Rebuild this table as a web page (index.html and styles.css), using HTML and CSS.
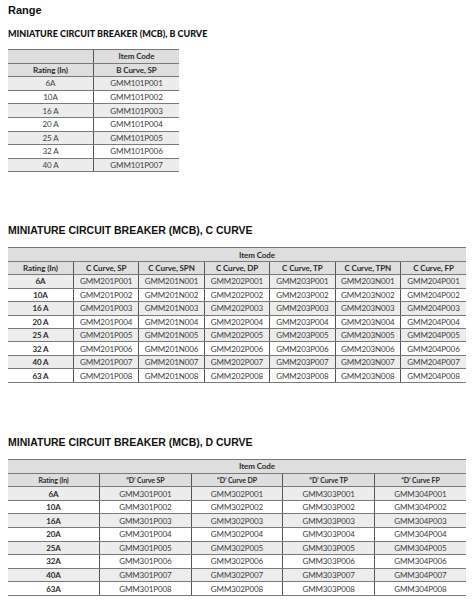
FILE: index.html
```html
<!DOCTYPE html>
<html>
<head>
<meta charset="utf-8">
<link rel="stylesheet" href="styles.css">
</head>
<body>
<h1 class="page-title">Range</h1>

<h2 class="sub-title sub-b">MINIATURE CIRCUIT BREAKER (MCB), B CURVE</h2>
<table class="grid grid-b">
  <tr class="head"><td></td><td class="strong">Item Code</td></tr>
  <tr class="head"><td class="strong">Rating (In)</td><td class="strong">B Curve, SP</td></tr>
  <tr class="odd"><td>6A</td><td>GMM101P001</td></tr>
  <tr><td>10A</td><td>GMM101P002</td></tr>
  <tr class="odd"><td>16 A</td><td>GMM101P003</td></tr>
  <tr><td>20 A</td><td>GMM101P004</td></tr>
  <tr class="odd"><td>25 A</td><td>GMM101P005</td></tr>
  <tr><td>32 A</td><td>GMM101P006</td></tr>
  <tr class="odd"><td>40 A</td><td>GMM101P007</td></tr>
</table>

<h2 class="sub-title sub-arial sub-c">MINIATURE CIRCUIT BREAKER (MCB), C CURVE</h2>
<table class="grid grid-c">
  <tr class="head top"><td colspan="7" class="strong span">Item Code</td></tr>
  <tr class="head"><td class="strong">Rating (In)</td><td class="strong">C Curve, SP</td><td class="strong">C Curve, SPN</td><td class="strong">C Curve, DP</td><td class="strong">C Curve, TP</td><td class="strong">C Curve, TPN</td><td class="strong">C Curve, FP</td></tr>
  <tr class="odd"><td class="strong">6A</td><td>GMM201P001</td><td>GMM201N001</td><td>GMM202P001</td><td>GMM203P001</td><td>GMM203N001</td><td>GMM204P001</td></tr>
  <tr><td class="strong">10A</td><td>GMM201P002</td><td>GMM201N002</td><td>GMM202P002</td><td>GMM203P002</td><td>GMM203N002</td><td>GMM204P002</td></tr>
  <tr class="odd"><td class="strong">16 A</td><td>GMM201P003</td><td>GMM201N003</td><td>GMM202P003</td><td>GMM203P003</td><td>GMM203N003</td><td>GMM204P003</td></tr>
  <tr><td class="strong">20 A</td><td>GMM201P004</td><td>GMM201N004</td><td>GMM202P004</td><td>GMM203P004</td><td>GMM203N004</td><td>GMM204P004</td></tr>
  <tr class="odd"><td class="strong">25 A</td><td>GMM201P005</td><td>GMM201N005</td><td>GMM202P005</td><td>GMM203P005</td><td>GMM203N005</td><td>GMM204P005</td></tr>
  <tr><td class="strong">32 A</td><td>GMM201P006</td><td>GMM201N006</td><td>GMM202P006</td><td>GMM203P006</td><td>GMM203N006</td><td>GMM204P006</td></tr>
  <tr class="odd"><td class="strong">40 A</td><td>GMM201P007</td><td>GMM201N007</td><td>GMM202P007</td><td>GMM203P007</td><td>GMM203N007</td><td>GMM204P007</td></tr>
  <tr><td class="strong">63 A</td><td>GMM201P008</td><td>GMM201N008</td><td>GMM202P008</td><td>GMM203P008</td><td>GMM203N008</td><td>GMM204P008</td></tr>
</table>

<h2 class="sub-title sub-arial sub-d">MINIATURE CIRCUIT BREAKER (MCB), D CURVE</h2>
<table class="grid grid-d">
  <tr class="head top"><td colspan="5" class="strong span">Item Code</td></tr>
  <tr class="head small"><td class="strong">Rating (In)</td><td class="strong">“D’ Curve SP</td><td class="strong">“D’ Curve DP</td><td class="strong">“D’ Curve TP</td><td class="strong">“D’ Curve FP</td></tr>
  <tr class="odd"><td class="strong">6A</td><td>GMM301P001</td><td>GMM302P001</td><td>GMM303P001</td><td>GMM304P001</td></tr>
  <tr><td class="strong">10A</td><td>GMM301P002</td><td>GMM302P002</td><td>GMM303P002</td><td>GMM304P002</td></tr>
  <tr class="odd"><td class="strong">16A</td><td>GMM301P003</td><td>GMM302P003</td><td>GMM303P003</td><td>GMM304P003</td></tr>
  <tr><td class="strong">20A</td><td>GMM301P004</td><td>GMM302P004</td><td>GMM303P004</td><td>GMM304P004</td></tr>
  <tr class="odd"><td class="strong">25A</td><td>GMM301P005</td><td>GMM302P005</td><td>GMM303P005</td><td>GMM304P005</td></tr>
  <tr><td class="strong">32A</td><td>GMM301P006</td><td>GMM302P006</td><td>GMM303P006</td><td>GMM304P006</td></tr>
  <tr class="odd"><td class="strong">40A</td><td>GMM301P007</td><td>GMM302P007</td><td>GMM303P007</td><td>GMM304P007</td></tr>
  <tr><td class="strong">63A</td><td>GMM301P008</td><td>GMM302P008</td><td>GMM303P008</td><td>GMM304P008</td></tr>
</table>
</body>
</html>
```
FILE: styles.css
```css
html, body {
  margin: 0;
  padding: 0;
  background: #ffffff;
}
body {
  padding: 0 8px;
  width: 458px;
  color: #111;
  font-family: "Liberation Sans", Arial, sans-serif;
}
.page-title {
  margin: 4px 0 0 0;
  font-size: 11px;
  line-height: 13px;
  font-weight: bold;
  color: #111;
}
.sub-title {
  margin: 0;
  font-weight: bold;
  color: #111;
}
.sub-b {
  margin-top: 10.5px;
  font-family: Lato, "Liberation Sans", sans-serif;
  font-size: 9px;
  line-height: 11px;
  font-weight: 900;
}
.sub-arial {
  font-family: "Liberation Sans", Arial, sans-serif;
  font-size: 10.5px;
  line-height: 12px;
}
.sub-c { margin-top: 52px; }
.sub-d { margin-top: 53.5px; }

.grid {
  border-collapse: collapse;
  table-layout: fixed;
  font-family: Lato, "Liberation Sans", sans-serif;
  font-size: 8px;
  letter-spacing: -0.1px;
  color: #404040;
}
.grid td {
  padding: 0;
  height: 12.6px;
  line-height: 12px;
  text-align: center;
  border-bottom: 1px solid #7a7a7a;
  white-space: nowrap;
  overflow: hidden;
}
.grid td + td {
  border-left: 1px solid #555;
}
.grid tr:first-child td {
  border-top: 1.5px solid #777;
}
.grid .head td { background: #dedede; }
.grid .odd td { background: #ececec; }
.strong { font-weight: bold; color: #2c2c2c; }
.grid .span { text-align: center; padding-left: 40px; }

.grid-b {
  margin-top: 10.5px;
  width: 170px;
}
.grid-b td { width: 85px; }

.grid-c {
  margin-top: 11px;
  width: 458px;
}
.grid-c td { height: 12.45px; }

.grid-d {
  margin-top: 10.8px;
  width: 458px;
}
.grid-d .small td { font-size: 7px; }
```
